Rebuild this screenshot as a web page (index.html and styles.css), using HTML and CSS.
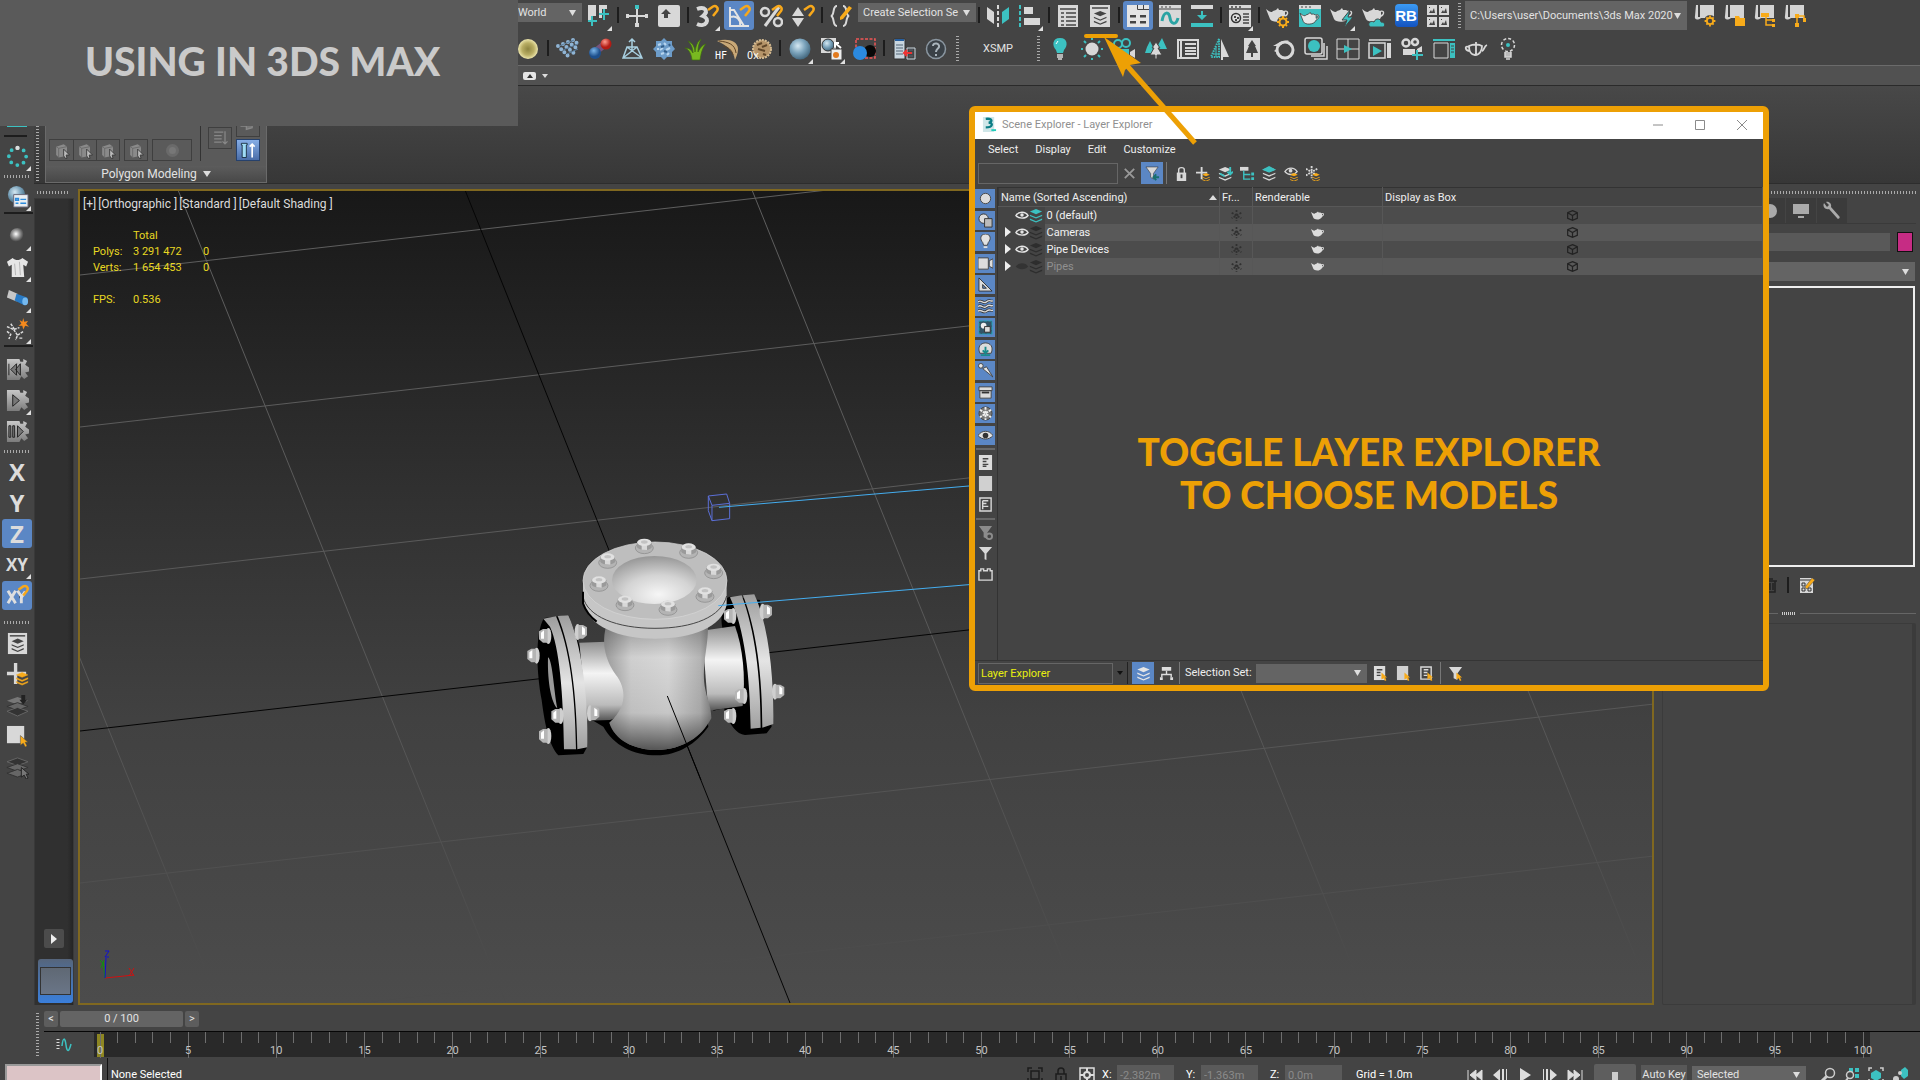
FILE: index.html
```html
<!DOCTYPE html>
<html lang="en">
<head>
<meta charset="utf-8">
<title>Using in 3ds Max</title>
<link rel="stylesheet" href="styles.css">
</head>
<body>
<svg class="defs" aria-hidden="true">
<defs>
<radialGradient id="gGlass" cx=".4" cy=".35" r=".7"><stop offset="0" stop-color="#d5e8f2"/><stop offset=".5" stop-color="#7ba3bb"/><stop offset="1" stop-color="#3d6178"/></radialGradient>
<radialGradient id="gYellow"><stop offset="0" stop-color="#8d8440"/><stop offset=".6" stop-color="#b9ae64"/><stop offset="1" stop-color="#ece5ac"/></radialGradient>
<radialGradient id="gGrey" cx=".4" cy=".4"><stop offset="0" stop-color="#fff"/><stop offset=".5" stop-color="#999"/><stop offset="1" stop-color="#444"/></radialGradient>
<radialGradient id="gRed" cx=".4" cy=".3"><stop offset="0" stop-color="#ff9d90"/><stop offset="1" stop-color="#b31b14"/></radialGradient>
<radialGradient id="gBlue" cx=".4" cy=".3"><stop offset="0" stop-color="#7ab4e8"/><stop offset="1" stop-color="#1d4f8c"/></radialGradient>
<linearGradient id="gGear" x2="0" y2="1"><stop offset="0" stop-color="#c8c8c8"/><stop offset="1" stop-color="#7b7b7b"/></linearGradient>
<linearGradient id="gSteel" x2="0" y2="1"><stop offset="0" stop-color="#8f8f8f"/><stop offset=".4" stop-color="#f4f4f4"/><stop offset=".8" stop-color="#bbb"/><stop offset="1" stop-color="#555"/></linearGradient>
<linearGradient id="gPlate" x2="0" y2="1"><stop offset="0" stop-color="#9d9d9d"/><stop offset=".5" stop-color="#e4e4e4"/><stop offset="1" stop-color="#a0a0a0"/></linearGradient>
<linearGradient id="gBody" x2="1" y2="0"><stop offset="0" stop-color="#999"/><stop offset=".25" stop-color="#cfcfcf"/><stop offset=".6" stop-color="#d8d8d8"/><stop offset=".9" stop-color="#b4b4b4"/><stop offset="1" stop-color="#858585"/></linearGradient>
<linearGradient id="gShade" x2="0" y2="1"><stop offset="0" stop-color="#000" stop-opacity=".25"/><stop offset=".25" stop-color="#000" stop-opacity="0"/><stop offset=".7" stop-color="#000" stop-opacity=".08"/><stop offset="1" stop-color="#000" stop-opacity=".6"/></linearGradient>
<radialGradient id="gDome" cx=".55" cy=".8" r=".8"><stop offset="0" stop-color="#f6f6f6"/><stop offset=".5" stop-color="#d4d4d4"/><stop offset="1" stop-color="#979797"/></radialGradient>
<linearGradient id="gGrid" gradientUnits="userSpaceOnUse" x1="0" y1="190" x2="0" y2="960"><stop offset="0" stop-color="#5e5e5e"/><stop offset=".7" stop-color="#575757"/><stop offset="1" stop-color="#4b4b4b"/></linearGradient>
<g id="stack3"><path d="M8 1 15 4 8 7 1 4Z"/><path d="M1 7.500 8 10.500 15 7.500V9L8 12 1 9Z"/><path d="M1 12 8 15 15 12V13.500L8 16.500 1 13.500Z"/></g>
<g id="magnet"><path d="M13 6 18 2.500C21 1 24 4 22 7L18 12" fill="none" stroke="#f8a81a" stroke-width="2.500"/></g>
<path id="pot" d="M6 8C3 8 2 6 0 5L4 15C6 19 17 19 19 13C24 11 23 5 18 7L16 6H13L12 4 10 6 7 7ZM19 8C21 7 22 10 19 11Z"/>
<path id="ptr" d="M0 0 8 7H5L7 11 5 12 3 8 0 10Z"/>
<g id="gear8"><circle r="3.500" fill="none" stroke="currentColor" stroke-width="2"/><path d="M0-6V-4M0 4V6M-6 0H-4M4 0H6M-4-4-3-3M4 4 3 3M4-4 3-3M-4 4-3 3" stroke="currentColor" stroke-width="2"/></g>
<g id="cog"><path d="M1 1H14L15 4H18V1L22 3 20 7 24 10V14L20 15 23 19 19 22 16 19 14 23H1Z" fill="url(#gGear)"/></g>
<g id="scroll"><path d="M2 1H4V13H6V1H20V14H7C3 17 0 15 1 12Z" fill="#d4d4d4"/></g>
<g id="nut"><ellipse rx="27" ry="17" cy="8" fill="#b4b4b4" stroke="#868686" stroke-width="2"/><path d="M-22-10C-12-22 12-22 22-8V7C12 17-12 17-22 6Z" fill="#9a9a9a"/><path d="M-8-4 8-4V14L-8 13Z" fill="#d8d8d8"/><ellipse cy="-9" rx="21" ry="11" fill="#e1e1e1"/><ellipse cy="-10" rx="10" ry="5" fill="#c2c2c2"/></g>
<g id="sidenut"><ellipse rx="9" ry="24" cx="10" fill="#cfcfcf"/><path d="M-18-14-6-21H8V20L-6 20-18 10Z" fill="#b5b5b5"/><path d="M-12-10-3-17V8L-12 8Z" fill="#fff"/></g>
</defs>
<symbol id="pivot" viewBox="0 0 24 24"><path d="M1 1H9V12H5V17H1ZM12 1H20V5H15V14H12Z" fill="#d8d8d8"/><path d="M5 12V22M1 17H10M17 5V16M12 10H22" stroke="#3cc1c1" stroke-width="2"/></symbol>
<symbol id="move" viewBox="0 0 24 24"><path d="M12 3V22M2 12H22" stroke="#d8d8d8" stroke-width="2"/><path d="M10 19H14V23H10ZM1 10H4V14H1ZM20 10H23V14H20Z" fill="#d8d8d8"/><path d="M10 1H14V5H10Z" fill="#3cc1c1"/></symbol>
<symbol id="place" viewBox="0 0 24 24"><rect x="1" y="1" width="22" height="22" rx="2" fill="#d8d8d8"/><path d="M9 5 14 10H11V14H7V10H4Z" fill="#444"/></symbol>
<symbol id="snap3" viewBox="0 0 24 24"><path d="M2 5C10 2 14 7 8 12C16 15 11 24 2 20" fill="none" stroke="#d8d8d8" stroke-width="4"/><use href="#magnet"/></symbol>
<symbol id="angle" viewBox="0 0 24 24"><path d="M3 3V22H22M3 6 7 6 17 22M4 13C9 11 14 16 13 21" fill="none" stroke="#e4e4e4" stroke-width="2"/><use href="#magnet"/></symbol>
<symbol id="percent" viewBox="0 0 24 24"><path d="M20 3 6 22" stroke="#d8d8d8" stroke-width="3"/><ellipse cx="6" cy="8" rx="4" ry="4" fill="none" stroke="#d8d8d8" stroke-width="2.500"/><circle cx="19" cy="18" r="4" fill="none" stroke="#d8d8d8" stroke-width="2.500"/><use href="#magnet"/></symbol>
<symbol id="spin" viewBox="0 0 24 24"><path d="M7 3 13 12H1ZM1 14H13L7 23Z" fill="#d8d8d8"/><use href="#magnet"/></symbol>
<symbol id="braces" viewBox="0 0 24 24"><path d="M8 2C3 2 6 11 2 12C6 13 3 22 8 22M14 2C19 2 16 11 20 12C16 13 19 22 14 22" fill="none" stroke="#d8d8d8" stroke-width="2"/><path d="M11 13 20 2 23 4 14 15 11 16Z" fill="#f8ab1a"/></symbol>
<symbol id="mirror" viewBox="0 0 24 24"><path d="M1 3 8 8V20L1 15Z" fill="#d8d8d8"/><path d="M23 3 16 8V20L23 15Z" fill="#3cc1c1"/><path d="M12 1V23" stroke="#d8d8d8" stroke-width="2" stroke-dasharray="4 2"/></symbol>
<symbol id="align" viewBox="0 0 24 24"><path d="M2 1V23" stroke="#3cc1c1" stroke-width="2" stroke-dasharray="4 2"/><path d="M6 3H15V10H6ZM6 14H22V21H6Z" fill="#d8d8d8"/></symbol>
<symbol id="listwin" viewBox="0 0 24 24"><path d="M2 1H22V23H2Z" fill="#d8d8d8"/><path d="M4 5H20M5 9H8M10 9H20M5 13H8M10 13H20M5 17H8M10 17H20M5 21H8M10 21H20" stroke="#444" stroke-width="1.500"/></symbol>
<symbol id="layerwin" viewBox="0 0 24 24"><path d="M2 1H22V23H2Z" fill="#d8d8d8"/><path d="M4 4H20" stroke="#444" stroke-width="1.500"/><use href="#stack3" transform="translate(5 6) scale(.9)" fill="#444"/></symbol>
<symbol id="ribbonwin" viewBox="0 0 24 24"><path d="M1 1H11V4H12V1H23V23H1Z" fill="#e4e4e4"/><path d="M11.500 1V5.500H23M17.500 1V5" fill="none" stroke="#444"/><path d="M4 11H10V13.500H4ZM14 11H20V13.500H14ZM4 17H10V19.500H4ZM14 17H20V19.500H14Z" fill="#444"/></symbol>
<symbol id="curve" viewBox="0 0 24 24"><path d="M1 1H23V23H1Z" fill="#d8d8d8"/><path d="M1 5H23M3 3H5M7 3H9M11 3H13" stroke="#444"/><path d="M4 17C6 6 11 8 12 14S18 22 20 14" fill="none" stroke="#2aa3a3" stroke-width="3"/></symbol>
<symbol id="schem" viewBox="0 0 24 24"><path d="M1 1H23V5H1Z" fill="#d8d8d8"/><path d="M1 19H23V23H1ZM11 7H13V11H17L12 16 7 11H11Z" fill="#3cc1c1"/></symbol>
<symbol id="mat" viewBox="0 0 24 24"><path d="M1 1H23V23H1Z" fill="#d8d8d8"/><path d="M1 5H23M3 3H5M7 3H9M11 3H13M15 10H21M15 13H21M15 16H21M15 19H21" stroke="#444" stroke-width="1.500"/><circle cx="8" cy="14" r="4.500" fill="#ddd" stroke="#333" stroke-width="1.500"/><path d="M6 12H8V14H6ZM9 13H11V15H9ZM7 15H9V17H7Z" fill="#444"/></symbol>
<symbol id="potgear" viewBox="0 0 24 24"><use href="#pot" fill="#d8d8d8"/><g transform="translate(17 18)" color="#f8ab1a"><circle r="6" fill="#444"/><use href="#gear8"/></g></symbol>
<symbol id="potwin" viewBox="0 0 24 24"><path d="M1 1H23V23H1Z" fill="#3cc1c1"/><path d="M1 1H23V5H1Z" fill="#d8d8d8"/><path d="M3 3H5M7 3H9M11 3H13" stroke="#444"/><use href="#pot" transform="translate(2 5) scale(.85)" fill="#e6e6e6" stroke="#444"/></symbol>
<symbol id="potbolt" viewBox="0 0 24 24"><use href="#pot" fill="#d8d8d8"/><path d="M20 6 12 16H17L14 24 23 13H18Z" fill="#3cc1c1" stroke="#444"/></symbol>
<symbol id="potcloud" viewBox="0 0 24 24"><use href="#pot" fill="#d8d8d8"/><path d="M8 23C5 20 8 16 12 18C14 13 19 15 19 18C24 18 23 23 21 23Z" fill="#3cc1c1" stroke="#444"/></symbol>
<symbol id="pics" viewBox="0 0 24 24"><path d="M1 1H11V11H1ZM13 1H23V11H13ZM1 13H11V23H1ZM13 13H23V23H13Z" fill="#d8d8d8"/><path d="M3 9 5 6 6 8 8 4 9 9ZM15 9 17 6 18 8 20 4 21 9ZM3 21 5 18 6 20 8 16 9 21ZM15 21 17 18 18 20 20 16 21 21Z" fill="#444"/><path d="M3 3H4V4H3ZM15 3H16V4H15ZM3 15H4V16H3ZM15 15H16V16H15Z" fill="#444"/></symbol>
<symbol id="sgear" viewBox="0 0 24 24"><use href="#scroll"/><g transform="translate(16 17)" color="#f8ab1a"><circle r="6" fill="#444"/><use href="#gear8" transform="scale(.9)"/></g></symbol>
<symbol id="sfold" viewBox="0 0 24 24"><use href="#scroll"/><path d="M11 12H15L16 14H21V22H11Z" fill="#f8ab1a"/></symbol>
<symbol id="stree" viewBox="0 0 24 24"><use href="#scroll"/><path d="M7 9H15V13H7ZM18 15H21V18H18ZM18 20H21V23H18Z" fill="#f8ab1a"/><path d="M12 13V21H18M12 16H18" fill="none" stroke="#f8ab1a" stroke-width="1.500"/></symbol>
<symbol id="snode" viewBox="0 0 24 24"><use href="#scroll"/><path d="M11 10H15V14H11ZM11 19H15V23H11ZM19 14H22V18H19Z" fill="#f8ab1a"/><path d="M13 14V19M15 12H20V14" fill="none" stroke="#f8ab1a" stroke-width="1.500"/></symbol>
<symbol id="ysphere" viewBox="0 0 24 24"><circle cx="12" cy="12" r="10" fill="url(#gYellow)"/></symbol>
<symbol id="array" viewBox="0 0 24 24"><g fill="none" stroke="#8fb4d4" stroke-width="4" stroke-linecap="round" stroke-dasharray="0 4.500"><path d="M2 9 14 21M7 7 19 17M12 5 22 12M17 3 22 7"/></g><path d="M3 9 18 3M7 13 22 7M11 17 22 12" stroke="#5c7f9e" fill="none"/></symbol>
<symbol id="blobs" viewBox="0 0 24 24"><path d="M7 15 17 7" stroke="#76537c" stroke-width="7"/><circle cx="7" cy="16" r="6" fill="url(#gBlue)"/><circle cx="18" cy="7" r="5.500" fill="url(#gRed)"/></symbol>
<symbol id="lattice" viewBox="0 0 24 24"><path d="M3 21 7 10H17L22 21ZM7 10 22 21M17 10 3 21M12 15V2M9 5 12 2 15 5" fill="none" stroke="#a8cfe0" stroke-width="1.500"/></symbol>
<symbol id="bush" viewBox="0 0 24 24"><path d="M12 1 15 4 20 4 20 8 23 12 20 15 20 20 15 20 12 23 9 20 4 20 4 15 1 12 4 9 4 4 9 4Z" fill="#6d9cc9"/><path d="M6 8 9 7M12 6 14 8M8 13 11 11M14 13 18 11M9 17 12 16M15 18 17 16M5 12H7" stroke="#b9d6ef" stroke-width="2"/><path d="M9 10 12 9M12 14 15 15M17 7 18 9" stroke="#345f8a" stroke-width="2"/></symbol>
<symbol id="grass" viewBox="0 0 24 24"><path d="M8 23C7 15 4 12 1 11C6 11 8 14 9 16C9 10 6 6 4 4C9 6 11 11 11 15C12 9 13 5 17 2C14 8 14 12 14 15C16 11 18 8 22 7C18 11 17 17 16 23Z" fill="#78b820" stroke="#3d6a10" stroke-width=".7"/></symbol>
<symbol id="hair" viewBox="0 0 24 24"><path d="M1 4C10 1 22 3 22 12C22 17 20 20 19 23C18 17 16 11 1 4Z" fill="#c8a877"/><path d="M3 4C12 5 19 7 20 16M7 9C12 10 16 13 17 18" stroke="#5f4425" fill="none"/></symbol>
<symbol id="ox" viewBox="0 0 24 24"><circle cx="14" cy="12" r="9" fill="#b59469" stroke="#d5bb91" stroke-width="2" stroke-dasharray="2 1"/><path d="M9 8 14 6M14 10 19 8M10 12 17 14M15 17 18 18" stroke="#60472a" stroke-width="2"/></symbol>
<symbol id="glass" viewBox="0 0 24 24"><circle cx="12" cy="12" r="10.500" fill="url(#gGlass)"/></symbol>
<symbol id="matwin" viewBox="0 0 24 24"><path d="M1 1H16V16H1Z" fill="#d8d8d8"/><circle cx="8" cy="8" r="6" fill="url(#gGlass)" stroke="#333"/><path d="M11 12H22V23H11Z" fill="#eee" stroke="#444"/><circle cx="16" cy="18" r="3" fill="#e27a1e"/><path d="M21 11 15 6M15 10V6H19" stroke="#fff" stroke-width="2"/></symbol>
<symbol id="redbox" viewBox="0 0 24 24"><path d="M4 2H23V21H4Z" fill="none" stroke="#f05555" stroke-width="1.500" stroke-dasharray="3 1.500"/><circle cx="18" cy="14" r="6" fill="#080808"/><circle cx="8" cy="16" r="7" fill="#2b8ae0"/></symbol>
<symbol id="docs" viewBox="0 0 24 24"><path d="M2 2H13V22H2Z" fill="#c9d6df" stroke="#333"/><path d="M3 3H12" stroke="#275f9f" stroke-width="2"/><path d="M4 8H11M4 11H11M4 14H11M4 17H11M17 13H21M17 16H21M17 19H21" stroke="#567"/><path d="M15 11H23V22H15Z" fill="none" stroke="#c9d6df"/><path d="M20 16H12M15 13 12 16 15 19" stroke="#e33" fill="none" stroke-width="2"/></symbol>
<symbol id="help" viewBox="0 0 24 24"><circle cx="12" cy="12" r="9.500" fill="#3a4147" stroke="#8a96a0" stroke-width="1.500"/><path d="M9 9C9 5 16 6 15 10C14 12 12 12 12 15M12 17V19" fill="none" stroke="#aab5bd" stroke-width="2"/></symbol>
<symbol id="bulb" viewBox="0 0 24 24"><path d="M12 1C4 1 4 9 8 13L9 16H15L16 13C20 9 20 1 12 1Z" fill="#3cc1c1"/><path d="M9 18H15M9 20H15M10 22H14" stroke="#d8d8d8" stroke-width="1.500"/><path d="M8 7 10 4" stroke="#fff"/></symbol>
<symbol id="sun" viewBox="0 0 24 24"><circle cx="12" cy="12" r="6.500" fill="#d8d8d8"/><path d="M12 1V3M12 21V23M1 12H3M21 12H23M4 4 6 6M18 18 20 20M20 4 18 6M4 20 6 18" stroke="#3cc1c1" stroke-width="2"/></symbol>
<symbol id="cam" viewBox="0 0 24 24"><circle cx="6" cy="7" r="4" fill="none" stroke="#3cc1c1" stroke-width="2"/><circle cx="14" cy="6" r="4" fill="none" stroke="#3cc1c1" stroke-width="2"/><path d="M3 12H17V18H3Z" fill="#3cc1c1"/><path d="M18 15 23 12V21L18 18Z" fill="#d8d8d8"/></symbol>
<symbol id="trees" viewBox="0 0 24 24"><path d="M6 4 10 12 8 13 9 16H1L3 10ZM18 1 23 12H15L14 8Z" fill="#3cc1c1"/><path d="M12 5 16 11H14L18 18H13V22H11V18H6L10 11H8Z" fill="#d8d8d8" stroke="#444"/></symbol>
<symbol id="book" viewBox="0 0 24 24"><path d="M2 3H22V21H2Z" fill="none" stroke="#d8d8d8" stroke-width="2"/><path d="M5 4V20M9 7H20M9 11H20M9 14H20M9 17H20" stroke="#d8d8d8" stroke-width="2"/></symbol>
<symbol id="halftree" viewBox="0 0 24 24"><path d="M11 2 3 20H11Z" fill="none" stroke="#3cc1c1" stroke-width="2" stroke-dasharray="1.500 1"/><path d="M8 10V20M5 17H11" stroke="#3cc1c1"/><path d="M13 2 21 20H15V23H13Z" fill="#d8d8d8"/></symbol>
<symbol id="treecard" viewBox="0 0 24 24"><path d="M4 1H20V23H4Z" fill="#d8d8d8"/><path d="M12 3 16 9H15L18 16H13V20H11V16H6L9 9H8Z" fill="#444"/></symbol>
<symbol id="ringc" viewBox="0 0 24 24"><circle cx="13" cy="13" r="8" fill="none" stroke="#d8d8d8" stroke-width="3"/><path d="M1 9 8 5 17 3 7 9ZM2 14 6 11V16Z" fill="#d8d8d8"/></symbol>
<symbol id="stackball" viewBox="0 0 24 24"><path d="M7 19H20V6M10 22H23V9" fill="none" stroke="#d8d8d8" stroke-width="1.500"/><rect x="1" y="1" width="17" height="16" rx="2" fill="#444" stroke="#d8d8d8" stroke-width="1.500"/><circle cx="10" cy="9" r="6" fill="#3cc1c1"/></symbol>
<symbol id="gridplay" viewBox="0 0 24 24"><path d="M1 2H23V22H1ZM12 2V22M1 12H23" fill="none" stroke="#d8d8d8"/><path d="M8 8 16 12 8 16Z" fill="#3cc1c1"/></symbol>
<symbol id="panelplay" viewBox="0 0 24 24"><path d="M1 3H23M1 6H17V21H1Z" fill="none" stroke="#d8d8d8" stroke-width="1.500"/><path d="M19 6H23V21H19Z" fill="#d8d8d8"/><path d="M5 9 14 14 5 19Z" fill="#3cc1c1"/></symbol>
<symbol id="camplus" viewBox="0 0 24 24"><circle cx="6" cy="6" r="3.500" fill="none" stroke="#d8d8d8" stroke-width="2.500"/><circle cx="15" cy="5" r="3" fill="none" stroke="#d8d8d8" stroke-width="2.500"/><path d="M3 12H15V18H3ZM17 12 22 9V15H17Z" fill="#d8d8d8"/><path d="M17 13V23M12 18H23" stroke="#3cc1c1" stroke-width="2"/></symbol>
<symbol id="panel" viewBox="0 0 24 24"><path d="M1 3H23" stroke="#3cc1c1" stroke-width="2"/><path d="M2 6H16V21H2Z" fill="none" stroke="#d8d8d8"/><path d="M18 6H23V21H18Z" fill="#3cc1c1"/><path d="M19 9H22M19 12H22M19 15H22" stroke="#444"/></symbol>
<symbol id="wpot" viewBox="0 0 24 24"><path d="M5 9C9 7 15 7 18 9C18 13 16 18 11 18C7 18 5 14 5 9ZM5 10C0 8 1 14 6 14M18 14C20 14 20 9 23 8M12 8V17M12 7V5" fill="none" stroke="#d8d8d8" stroke-width="1.800"/></symbol>
<symbol id="bulbdot" viewBox="0 0 24 24"><circle cx="12" cy="8" r="6.500" fill="none" stroke="#d8d8d8" stroke-width="1.500" stroke-dasharray="3 2"/><circle cx="12" cy="8" r="2" fill="#3cc1c1"/><path d="M9 15V20H15V15M10 22H14" fill="#bbb" stroke="#d8d8d8" stroke-width="1.500"/></symbol>
<symbol id="ringdots" viewBox="0 0 24 24"><circle cx="12" cy="12" r="9" fill="none" stroke="#3cc1c1" stroke-width="4" stroke-linecap="round" stroke-dasharray="0 7.070" transform="rotate(-90 12 12)"/><circle cx="12" cy="3" r="2.300" fill="#ddd"/></symbol>
<symbol id="ballwin" viewBox="0 0 24 24"><circle cx="11" cy="10" r="9" fill="url(#gGlass)"/><path d="M8 10H23V23H8Z" fill="#e9eef2" stroke="#667"/><path d="M10 14H13V16H10ZM15 15H21M10 19H13M15 19H21" stroke="#2d8bdc" stroke-width="1.500" fill="none"/></symbol>
<symbol id="ball" viewBox="0 0 24 24"><circle cx="12" cy="11" r="8" fill="url(#gGrey)"/></symbol>
<symbol id="shirt" viewBox="0 0 24 24"><path d="M7 2C10 5 14 5 17 2L23 6 21 11 18 9 19 22H6L6 9 3 11 1 6Z" fill="#e6e6e6"/><path d="M9 8 10 20M14 6 15 20" stroke="#b5b5b5"/></symbol>
<symbol id="capsule" viewBox="0 0 24 24"><path d="M3 3 12 7 11 15 1 11Z" fill="#c7c7c7"/><path d="M11 7 22 11C24 14 22 19 19 19L9 14Z" fill="#297ac4"/><ellipse cx="20" cy="15" rx="3" ry="4" fill="#75b9ef"/></symbol>
<symbol id="stick" viewBox="0 0 24 24"><path d="M1 9 8 12 14 10M8 12 12 18 10 23M12 18 18 14M1 14 5 17 3 22M5 6 9 12M14 21H18" fill="none" stroke="#ddd" stroke-width="1.500" stroke-dasharray="3 1"/><path d="M18 0 19 4 23 3 21 6 24 9 20 8 18 12 17 8 13 8 16 6 14 2 17 4Z" fill="#f58a1d"/></symbol>
<symbol id="cogback" viewBox="0 0 24 24"><use href="#cog"/><path d="M3 6V18M5 12 11 6V18ZM10 12 15 6V18Z" fill="#777" stroke="#222"/></symbol>
<symbol id="cogplay" viewBox="0 0 24 24"><use href="#cog"/><path d="M7 6 14 12 7 18Z" fill="#777" stroke="#222"/></symbol>
<symbol id="cogpause" viewBox="0 0 24 24"><use href="#cog"/><path d="M3 6H5V18H3ZM7 6H9V18H7ZM12 6 18 12 12 18Z" fill="#777" stroke="#222"/></symbol>
<symbol id="addlayer" viewBox="0 0 24 24"><path d="M10 0V22M1 11H21" stroke="#d8d8d8" stroke-width="3.500"/><use href="#stack3" transform="translate(10 9) scale(.85)" fill="#f8ab1a" stroke="#f8ab1a" stroke-width=".6"/></symbol>
<symbol id="layerdim" viewBox="0 0 24 24"><path d="M1 7 12 3 23 7 12 11Z" fill="#777"/><path d="M1 13 12 9 23 13 12 17Z" fill="#666" stroke="#333"/><path d="M1 18 12 14 23 18 12 23Z" fill="#333" stroke="#666"/><path d="M16 1H20V6H22L18 11 14 6H16Z" fill="#222"/></symbol>
<symbol id="sqptr" viewBox="0 0 24 24"><path d="M1 1H19V19H1Z" fill="#d8d8d8"/><use href="#ptr" x="15" y="11" fill="#f8ab1a" stroke="#444" stroke-width=".5"/></symbol>
<symbol id="layerptr" viewBox="0 0 24 24"><path d="M1 6 12 2 23 6 12 10Z" fill="#333" stroke="#666"/><path d="M1 12 12 8 23 12 12 16Z" fill="#666" stroke="#333"/><path d="M1 18 12 14 23 18 12 22Z" fill="#666" stroke="#333"/><use href="#ptr" x="16" y="12" fill="#777" stroke="#222"/></symbol>
<symbol id="xysnap" viewBox="0 0 24 24"><path d="M2 7 10 20M10 7 2 20M12 7 16 13V20M20 8 16 14" stroke="#dedede" stroke-width="3"/><use href="#magnet"/></symbol>
<symbol id="gcube" viewBox="0 0 24 24"><path d="M5 8 14 5 18 8V19L8 21 5 18Z" fill="#8a8a8a"/><path d="M5 8 8 10V21M8 10 18 8" stroke="#666" fill="none"/><path d="M14 11 21 18H17L18 22 16 22 14 19Z" fill="#bbb" stroke="#333"/></symbol>
<symbol id="filter" viewBox="0 0 16 16"><path d="M1 1H15L9 8V15L7 14V8Z" fill="#d8d8d8"/></symbol>
<symbol id="filterarrow" viewBox="0 0 16 16"><path d="M1 1H14L9 8V14L6 12V8Z" fill="#d8d8d8" stroke="#333" stroke-width=".6"/><path d="M15 12H9M12 9 9 12 12 15" stroke="#176f6f" fill="none" stroke-width="2"/></symbol>
<symbol id="filtergear" viewBox="0 0 16 16"><path d="M1 1H15L10 8V15L6 13V8Z" fill="#8c8c8c"/><circle cx="12" cy="12" r="3" fill="#444" stroke="#8c8c8c" stroke-width="2"/></symbol>
<symbol id="filterptr" viewBox="0 0 16 16"><path d="M1 1H15L10 8V15L6 13V8Z" fill="#d8d8d8"/><use href="#ptr" transform="translate(9 7) scale(.75)" fill="#f8ab1a"/></symbol>
<symbol id="lock" viewBox="0 0 16 16"><path d="M5 8V4C5 1 11 1 11 4V8" fill="none" stroke="#d8d8d8" stroke-width="1.500"/><path d="M3 7H13V16H3Z" fill="#d8d8d8"/><path d="M8 9V13" stroke="#444" stroke-width="2"/></symbol>
<symbol id="add16" viewBox="0 0 16 16"><path d="M6 1V14M0 7H12" stroke="#d8d8d8" stroke-width="2"/><use href="#stack3" transform="translate(6 7) scale(.58)" fill="#f8ab1a"/></symbol>
<symbol id="lay1" viewBox="0 0 16 16"><use href="#stack3" transform="scale(.95)" fill="#d8d8d8"/><path d="M13 1V9M10 6 13 9 16 6M2 8 7 11" stroke="#3cc1c1" stroke-width="2" fill="none"/></symbol>
<symbol id="tree16" viewBox="0 0 16 16"><path d="M0 1H9V5H0Z" fill="#d8d8d8"/><path d="M4 5V14H11M4 9H11" stroke="#3cc1c1" fill="none" stroke-width="1.500"/><path d="M12 7H15V10H12ZM12 12H15V15H12Z" fill="#3cc1c1"/></symbol>
<symbol id="lay2" viewBox="0 0 16 16"><use href="#stack3" transform="scale(.95)" fill="#d8d8d8"/><path d="M7.500 0 15 4 7.500 7 0 4Z" fill="#3cc1c1"/></symbol>
<symbol id="eye16" viewBox="0 0 16 16"><path d="M1 6C4 1 11 1 14 6C11 10 4 10 1 6Z" fill="none" stroke="#d8d8d8" stroke-width="1.500"/><circle cx="7" cy="5" r="2" fill="#d8d8d8"/><use href="#stack3" transform="translate(6 7) scale(.58)" fill="#f8ab1a"/></symbol>
<symbol id="snow16" viewBox="0 0 16 16"><path d="M6 0V13M0 3 12 10M12 3 0 10" stroke="#d8d8d8" stroke-width="2" stroke-dasharray="2 1"/><use href="#stack3" transform="translate(6 7) scale(.58)" fill="#f8ab1a"/></symbol>
<symbol id="eye" viewBox="0 0 16 16"><path d="M1 8C4 3 12 3 15 8C12 12 4 12 1 8Z" fill="none" stroke="currentColor" stroke-width="1.500"/><circle cx="8" cy="7.500" r="2" fill="currentColor"/></symbol>
<symbol id="eyeoff" viewBox="0 0 16 16"><path d="M1 8C4 3 12 3 15 8C12 12 4 12 1 8Z" fill="#333"/></symbol>
<symbol id="layers" viewBox="0 0 16 17"><use href="#stack3" fill="currentColor"/></symbol>
<symbol id="flake" viewBox="0 0 16 16"><path d="M8 0V16M1 4 15 12M15 4 1 12" stroke="currentColor" stroke-width="2.500" stroke-dasharray="3 2"/></symbol>
<symbol id="teapot" viewBox="0 0 24 22"><use href="#pot" fill="#dcdcdc"/></symbol>
<symbol id="boxi" viewBox="0 0 16 16"><path d="M8 1 15 4V12L8 15 1 12V4ZM1 4 8 8 15 4M8 8V15" fill="none" stroke="#222" stroke-width="1.800"/></symbol>
<symbol id="c1" viewBox="0 0 16 16"><circle cx="8" cy="8" r="5.500" fill="#dcdcdc" stroke="#444"/></symbol>
<symbol id="c2" viewBox="0 0 16 16"><circle cx="6" cy="6" r="5" fill="#dcdcdc" stroke="#333"/><path d="M7 6H15V15H7Z" fill="#bbb" stroke="#333"/></symbol>
<symbol id="c3" viewBox="0 0 16 16"><path d="M8 0C2 0 2 6 5 9L6 12H10L11 9C14 6 14 0 8 0Z" fill="#e2e2e2" stroke="#444"/><path d="M6 14H10" stroke="#ddd" stroke-width="2"/></symbol>
<symbol id="c4" viewBox="0 0 16 16"><path d="M0 2H11V14H0ZM12 5 16 3V13L12 11Z" fill="#dcdcdc" stroke="#444"/></symbol>
<symbol id="c5" viewBox="0 0 16 16"><path d="M1 1V15H15ZM5 8V12H9Z" fill="#dcdcdc" stroke="#333" fill-rule="evenodd"/></symbol>
<symbol id="c6" viewBox="0 0 16 16"><path d="M0 3C4 0 5 6 9 3S13 3 16 2M0 8C4 5 5 11 9 8S13 8 16 7M0 13C4 10 5 16 9 13S13 13 16 12" fill="none" stroke="#333" stroke-width="3"/><path d="M0 3C4 0 5 6 9 3S13 3 16 2M0 8C4 5 5 11 9 8S13 8 16 7M0 13C4 10 5 16 9 13S13 13 16 12" fill="none" stroke="#dcdcdc" stroke-width="1.500"/></symbol>
<symbol id="c7" viewBox="0 0 16 16"><path d="M1 1H15V15H1Z" fill="#356" stroke="#2ab" stroke-dasharray="4 1"/><circle cx="6" cy="6" r="3" fill="#eee"/><path d="M7 7H13V13H7Z" fill="#ddd" stroke="#333"/></symbol>
<symbol id="c8" viewBox="0 0 16 16"><path d="M2 12C-1 5 3 1 8 1S17 5 14 12Z" fill="#dcdcdc" stroke="#444"/><path d="M8 5V12M5 9 8 12 11 9M3 14H13" stroke="#198a8a" stroke-width="2" fill="none"/></symbol>
<symbol id="c9" viewBox="0 0 16 16"><circle cx="3" cy="3" r="2.500" fill="#e6e6e6" stroke="#444"/><path d="M5 6 9 4 16 15Z" fill="#e6e6e6" stroke="#444"/></symbol>
<symbol id="c10" viewBox="0 0 16 16"><path d="M1 2H15V6H1ZM2 6H14V14H2Z" fill="#dcdcdc" stroke="#444"/><path d="M4 8H12" stroke="#333" stroke-width="2"/></symbol>
<symbol id="c11" viewBox="0 0 16 16"><circle cx="8" cy="8" r="7" fill="#777" stroke="#444"/><path d="M8 1V15M2 4 14 12M14 4 2 12" stroke="#eee" stroke-width="2" stroke-dasharray="3 1"/></symbol>
<symbol id="c12" viewBox="0 0 16 16"><path d="M0 8C4 2 12 2 16 8C12 13 4 13 0 8Z" fill="#e2e2e2" stroke="#444"/><circle cx="8" cy="8" r="3" fill="#333"/></symbol>
<symbol id="doc" viewBox="0 0 16 16"><path d="M1 0H15V16H1Z" fill="#dcdcdc"/><path d="M5 4H11M5 7H9M5 10H11M5 12H9" stroke="#444" stroke-width="1.500"/></symbol>
<symbol id="blank" viewBox="0 0 16 16"><path d="M1 0H15V16H1Z" fill="#d0d0d0"/></symbol>
<symbol id="docout" viewBox="0 0 16 16"><path d="M2 1H14V15H2Z" fill="#444" stroke="#d8d8d8" stroke-width="1.500"/><path d="M5 4H11M5 7H9M5 10H11M5 4V13" stroke="#d8d8d8" stroke-width="1.500"/></symbol>
<symbol id="brick" viewBox="0 0 16 16"><path d="M1 4H3V2H6V4H10V2H13V4H15V14H1Z" fill="none" stroke="#d8d8d8" stroke-width="1.500"/></symbol>
<symbol id="hier" viewBox="0 0 16 16"><path d="M3 1H13V5H3ZM1 12H4V15H1ZM12 12H15V15H12Z" fill="#dcdcdc"/><path d="M8 5V9M3 12V9H13V12" fill="none" stroke="#dcdcdc" stroke-width="1.500"/></symbol>
<symbol id="docp" viewBox="0 0 16 16"><path d="M1 0H13V15H1Z" fill="#dcdcdc"/><path d="M4 4H10M4 7H8M4 10H8" stroke="#444" stroke-width="1.500"/><use href="#ptr" transform="translate(9 7) scale(.75)" fill="#f8ab1a"/></symbol>
<symbol id="blankp" viewBox="0 0 16 16"><path d="M1 0H13V15H1Z" fill="#d0d0d0"/><use href="#ptr" transform="translate(9 7) scale(.75)" fill="#f8ab1a"/></symbol>
<symbol id="docoutp" viewBox="0 0 16 16"><path d="M2 1H13V14H2Z" fill="none" stroke="#d8d8d8" stroke-width="1.500"/><path d="M5 4H10M5 7H9M5 10H9" stroke="#d8d8d8" stroke-width="1.500"/><use href="#ptr" transform="translate(9 7) scale(.75)" fill="#f8ab1a"/></symbol>
<symbol id="app3" viewBox="0 0 16 16"><path d="M1 0H13V16H1Z" fill="#cfe6e8"/><path d="M4 2C12 1 11 6 7 6C12 6 12 11 4 11" fill="none" stroke="#0b7d85" stroke-width="2.500"/><path d="M10 14H15" stroke="#2cb" stroke-width="2"/></symbol>
<symbol id="monitor" viewBox="0 0 24 24"><path d="M4 5H20V15H4ZM9 17H15V19H9Z" fill="#aaa"/></symbol>
<symbol id="wrench" viewBox="0 0 24 24"><path d="M4 4C2 8 6 11 9 10L17 19C18 21 21 19 19 17L11 8C12 5 9 2 6 3L9 6 7 8Z" fill="#aaa"/></symbol>
<symbol id="disc" viewBox="0 0 24 24"><circle cx="12" cy="12" r="7" fill="#aaa"/></symbol>
<symbol id="trash" viewBox="0 0 16 16"><path d="M2 4H14M4 4V15H12V4M6 2H10M7 6V13M10 6V13" fill="none" stroke="#222" stroke-width="1.500"/></symbol>
<symbol id="sets" viewBox="0 0 16 16"><path d="M1 1H14V16H1Z" fill="#d8d8d8"/><path d="M3 6H6V9H3ZM3 11H6V14H3ZM9 11H12V14H9ZM1 3H14" fill="none" stroke="#333"/><path d="M6 10 13 1 16 3 8 12Z" fill="#f8ab1a" stroke="#444" stroke-width=".5"/></symbol>
<symbol id="zoomi" viewBox="0 0 16 16"><circle cx="10" cy="6" r="4.500" fill="none" stroke="#ccc" stroke-width="1.500"/><path d="M7 9 1 15" stroke="#ccc" stroke-width="3"/></symbol>
<symbol id="zoomall" viewBox="0 0 16 16"><path d="M5 1H9V5H5ZM11 1H15V5H11ZM11 7H15V11H11Z" fill="#3cc1c1"/><circle cx="6" cy="8" r="3.500" fill="none" stroke="#ccc" stroke-width="1.500"/><path d="M4 11 1 15" stroke="#ccc" stroke-width="2"/></symbol>
<symbol id="extent" viewBox="0 0 16 16"><path d="M1 4V1H4M12 1H15V4M1 12V15H4M12 15H15V12" fill="none" stroke="#ccc" stroke-width="1.500"/><path d="M8 3 13 6V11L8 14 3 11V6Z" fill="#3cc1c1"/></symbol>
<symbol id="extall" viewBox="0 0 16 16"><path d="M9 3 13 0 16 3V9L12 12 9 9Z" fill="#3cc1c1"/><circle cx="4" cy="12" r="3" fill="#ccc"/><circle cx="8" cy="6" r="2" fill="#ccc"/></symbol>
<symbol id="curvemini" viewBox="0 0 16 16"><path d="M2 2V14" stroke="#ddd" stroke-width="3" stroke-dasharray="1 2"/><path d="M6 9C7 0 9 0 10 8S13 15 15 7" fill="none" stroke="#3cc1c1" stroke-width="1.500"/></symbol>
<symbol id="iso" viewBox="0 0 16 16"><path d="M1 5V1H5M11 1H15V5M1 11V15H5M15 11V15H11M4 4H12V12H4Z" fill="none" stroke="#1c1c1c" stroke-width="1.500"/></symbol>
<symbol id="lockd" viewBox="0 0 16 16"><path d="M5 7V4C5 0 11 0 11 4V7M3 7H13V16H3ZM8 9V13" fill="none" stroke="#1c1c1c" stroke-width="1.500"/></symbol>
<symbol id="absmode" viewBox="0 0 16 16"><path d="M1 1H15V15H1Z" fill="none" stroke="#ddd" stroke-width="1.500"/><circle cx="8" cy="8" r="3" fill="none" stroke="#ddd" stroke-width="2"/><path d="M8 1V5M8 11V15M1 8H5M11 8H15" stroke="#ddd" stroke-width="2"/></symbol>
<symbol id="p1" viewBox="0 0 16 16"><path d="M1 3V13M9 3V13L3 8ZM15 3V13L9 8Z" fill="#ddd" stroke="#ddd"/></symbol>
<symbol id="p2" viewBox="0 0 16 16"><path d="M8 2V14L1 8ZM10 2H12V14H10ZM14 2H15V14H14Z" fill="#ddd"/></symbol>
<symbol id="p3" viewBox="0 0 16 16"><path d="M3 1 14 8 3 15Z" fill="#ddd"/></symbol>
<symbol id="p4" viewBox="0 0 16 16"><path d="M8 2V14L15 8ZM1 2H2V14H1ZM4 2H6V14H4Z" fill="#ddd"/></symbol>
<symbol id="p5" viewBox="0 0 16 16"><path d="M15 3V13M7 3V13L13 8ZM1 3V13L7 8Z" fill="#ddd" stroke="#ddd"/></symbol>
</svg>

<div class="app">
<header class="topbars">
  <div class="bar" role="toolbar" aria-label="Main toolbar">
    <select class="combo ref" aria-label="Reference coordinate system"><option>World</option></select>
    <button class="tool fly" aria-label="Use pivot point center"><svg><use href="#pivot"/></svg></button><i class="sep"></i>
    <button class="tool" aria-label="Select and manipulate"><svg><use href="#move"/></svg></button>
    <button class="tool" aria-label="Keyboard shortcut override"><svg><use href="#place"/></svg></button><i class="sep"></i>
    <button class="tool fly" aria-label="Snaps toggle"><svg><use href="#snap3"/></svg></button>
    <button class="tool on" aria-label="Angle snap"><svg><use href="#angle"/></svg></button>
    <button class="tool" aria-label="Percent snap"><svg><use href="#percent"/></svg></button>
    <button class="tool" aria-label="Spinner snap"><svg><use href="#spin"/></svg></button><i class="sep"></i>
    <button class="tool" aria-label="Edit named selection sets"><svg><use href="#braces"/></svg></button>
    <select class="combo sets" aria-label="Named selection sets"><option>Create Selection Se</option></select><i class="sep"></i>
    <button class="tool" aria-label="Mirror"><svg><use href="#mirror"/></svg></button>
    <button class="tool fly" aria-label="Align"><svg><use href="#align"/></svg></button><i class="sep"></i>
    <button class="tool" aria-label="Toggle Scene Explorer"><svg><use href="#listwin"/></svg></button>
    <button class="tool" aria-label="Toggle Layer Explorer"><svg><use href="#layerwin"/></svg></button><i class="sep"></i>
    <button class="tool on" aria-label="Toggle ribbon"><svg><use href="#ribbonwin"/></svg></button>
    <button class="tool" aria-label="Curve editor"><svg><use href="#curve"/></svg></button>
    <button class="tool" aria-label="Schematic view"><svg><use href="#schem"/></svg></button><i class="sep"></i>
    <button class="tool fly" aria-label="Material editor"><svg><use href="#mat"/></svg></button><i class="sep"></i>
    <button class="tool" aria-label="Render setup"><svg><use href="#potgear"/></svg></button>
    <button class="tool" aria-label="Rendered frame window"><svg><use href="#potwin"/></svg></button>
    <button class="tool fly" aria-label="Render production"><svg><use href="#potbolt"/></svg></button>
    <button class="tool" aria-label="Render in the cloud"><svg><use href="#potcloud"/></svg></button>
    <button class="tool"><span class="rb">RB</span></button>
    <button class="tool" aria-label="Gallery"><svg><use href="#pics"/></svg></button><i class="grip-v"></i>
    <select class="combo path" aria-label="Project folder"><option>C:\Users\user\Documents\3ds Max 2020</option></select>
    <button class="tool" aria-label="Project settings"><svg><use href="#sgear"/></svg></button>
    <button class="tool" aria-label="Project folder"><svg><use href="#sfold"/></svg></button>
    <button class="tool" aria-label="Project tree"><svg><use href="#stree"/></svg></button>
    <button class="tool" aria-label="Project nodes"><svg><use href="#snode"/></svg></button>
  </div>
  <div class="bar second" role="toolbar" aria-label="Extras toolbar">
    <button class="tool" aria-label="Sphere"><svg><use href="#ysphere"/></svg></button><i class="sep wide"></i>
    <button class="tool" aria-label="Array"><svg><use href="#array"/></svg></button>
    <button class="tool" aria-label="Blob mesh"><svg><use href="#blobs"/></svg></button>
    <button class="tool" aria-label="Lattice"><svg><use href="#lattice"/></svg></button>
    <button class="tool" aria-label="Noise"><svg><use href="#bush"/></svg></button>
    <button class="tool" aria-label="Grass"><svg><use href="#grass"/></svg></button>
    <button class="tool"><svg><use href="#hair"/></svg><span class="tag">HF</span></button>
    <button class="tool"><svg><use href="#ox"/></svg><span class="tag">Ox</span></button><i class="sep wide"></i>
    <button class="tool fly" aria-label="Glass material"><svg><use href="#glass"/></svg></button>
    <button class="tool fly" aria-label="Material window"><svg><use href="#matwin"/></svg></button>
    <button class="tool" aria-label="Region"><svg><use href="#redbox"/></svg></button><i class="sep wide"></i>
    <button class="tool" aria-label="Documents"><svg><use href="#docs"/></svg></button>
    <button class="tool" aria-label="Help"><svg><use href="#help"/></svg></button><i class="grip-v"></i>
    <button class="xsmp">XSMP</button><i class="grip-v"></i>
    <button class="tool" aria-label="Light"><svg><use href="#bulb"/></svg></button>
    <button class="tool" aria-label="Sun"><svg><use href="#sun"/></svg></button>
    <button class="tool" aria-label="Camera"><svg><use href="#cam"/></svg></button>
    <button class="tool" aria-label="Trees"><svg><use href="#trees"/></svg></button>
    <button class="tool" aria-label="Library"><svg><use href="#book"/></svg></button>
    <button class="tool" aria-label="Level of detail"><svg><use href="#halftree"/></svg></button>
    <button class="tool" aria-label="Tree card"><svg><use href="#treecard"/></svg></button>
    <button class="tool" aria-label="Ring"><svg><use href="#ringc"/></svg></button>
    <button class="tool" aria-label="Frame stack"><svg><use href="#stackball"/></svg></button>
    <button class="tool" aria-label="Play grid"><svg><use href="#gridplay"/></svg></button>
    <button class="tool" aria-label="Play panel"><svg><use href="#panelplay"/></svg></button>
    <button class="tool" aria-label="Add camera"><svg><use href="#camplus"/></svg></button>
    <button class="tool" aria-label="Panel"><svg><use href="#panel"/></svg></button>
    <button class="tool" aria-label="Teapot"><svg><use href="#wpot"/></svg></button>
    <button class="tool" aria-label="Light lister"><svg><use href="#bulbdot"/></svg></button>
  </div>
  <div class="ribbon-tabs"><button class="mini" aria-label="Minimize ribbon"><i class="up"></i></button><i class="down small"></i></div>
</header>

<div class="middle">
  <aside class="side" aria-label="Side toolbar">
    <i class="remnant"></i><i class="rule gap"></i>
    <button class="vtool fly" aria-label="Circular selection"><svg><use href="#ringdots"/></svg></button><i class="grip-h"></i>
    <button class="vtool fly" aria-label="Asset list"><svg><use href="#ballwin"/></svg></button><i class="rule"></i>
    <button class="vtool fly" aria-label="Rigid body"><svg><use href="#ball"/></svg></button>
    <button class="vtool fly" aria-label="Cloth"><svg><use href="#shirt"/></svg></button>
    <button class="vtool fly" aria-label="Constraint"><svg><use href="#capsule"/></svg></button>
    <button class="vtool fly" aria-label="Ragdoll"><svg><use href="#stick"/></svg></button><i class="rule"></i>
    <button class="vtool" aria-label="Reset simulation"><svg><use href="#cogback"/></svg></button>
    <button class="vtool fly" aria-label="Start simulation"><svg><use href="#cogplay"/></svg></button>
    <button class="vtool" aria-label="Step simulation"><svg><use href="#cogpause"/></svg></button><i class="grip-h"></i>
    <button class="vtool axis">X</button>
    <button class="vtool axis">Y</button>
    <button class="vtool axis on">Z</button>
    <button class="vtool axis two fly">XY</button>
    <button class="vtool on" aria-label="Snap axis constraint"><svg><use href="#xysnap"/></svg></button><i class="grip-h loose"></i>
    <button class="vtool" aria-label="Layer window"><svg><use href="#layerwin"/></svg></button>
    <button class="vtool" aria-label="Create layer"><svg><use href="#addlayer"/></svg></button>
    <button class="vtool" aria-label="Add to layer"><svg><use href="#layerdim"/></svg></button>
    <button class="vtool" aria-label="Select in layer"><svg><use href="#sqptr"/></svg></button>
    <button class="vtool" aria-label="Set current layer"><svg><use href="#layerptr"/></svg></button>
  </aside>
  <div class="main">
    <section class="ribbon" aria-label="Ribbon">
      <i class="grip-tall"></i>
      <div class="poly">
        <div class="poly-tools">
          <div class="trio"><button aria-label="Vertex"><svg><use href="#gcube"/></svg></button><button aria-label="Edge"><svg><use href="#gcube"/></svg></button><button aria-label="Polygon"><svg><use href="#gcube"/></svg></button></div>
          <button class="pbtn" aria-label="Element"><svg><use href="#gcube"/></svg></button>
          <button class="pbtn long" aria-label="Preview"><i class="dot"></i></button>
          <i class="pline"></i>
          <button class="pbtn raised" aria-label="Collapse stack"><svg viewBox="0 0 24 24"><path d="M5 5H16M5 9H14M5 13H14M5 17H14M18 4V19M15 16 18 19 21 16" stroke="#888" fill="none" stroke-width="1.500"/></svg></button>
          <div class="pcol"><button class="pbtn" aria-label="Pin stack"><svg viewBox="0 0 24 24"><path d="M3 12H10M10 8V16L17 14V10Z" stroke="#888" fill="#777" stroke-width="1.500"/></svg></button><button class="pbtn pon" aria-label="Show end result"><svg viewBox="0 0 24 24"><path d="M4 4H11V6H10V21H5V6H4Z" fill="#9fdcf5" stroke="#123"/><path d="M17 21V5M14 8 17 5 20 8" fill="none" stroke="#fff" stroke-width="2"/></svg></button></div>
        </div>
        <button class="poly-name">Polygon Modeling <i class="down"></i></button>
      </div>
    </section>
    <div class="work">
      <div class="tabs-col"><i class="grip-h"></i><div class="well"><button class="expand" aria-label="Create viewport layout tab"><i class="right"></i></button><button class="thumb" aria-label="Viewport layout"><i></i></button></div></div>
      <main class="viewport">
        <svg class="scene" viewBox="80 191 1572 812" preserveAspectRatio="xMidYMid slice" role="img" aria-label="Flanged pipe valve on a grid">
          <g stroke="url(#gGrid)" fill="none">
            <path d="M-109 190 219 1003M178 190 506 1003M752 190 1080 1003M1039 190 1367 1003M1326 190 1654 1003M80 275 1654 96M80 427 1654 248M80 579 1654 400M80 883 1654 704M80 1035 1654 856"/>
          </g>
          <path d="M465 190 790 1003M80 731 1654 552" stroke="#050505" fill="none"/>
          <g transform="translate(500 460) scale(.3333)">
            <path d="M690 410C664 415 660 470 668 510L640 752 672 745C690 800 710 822 735 825L800 820 815 800 780 420Z" fill="#000"/>
            <use href="#sidenut" x="690" y="468"/><use href="#sidenut" x="690" y="768"/>
            <path d="M606 512 705 498C728 560 738 650 728 738L625 752Z" fill="url(#gSteel)"/>
            <path d="M690 412 725 406C765 510 782 650 782 803L752 806C750 650 735 510 690 412Z" fill="url(#gPlate)"/>
            <path d="M729 406 763 403C808 500 822 660 820 792L787 803C787 650 770 510 729 406Z" fill="url(#gPlate)"/>
            <use href="#sidenut" transform="translate(798 455) scale(-1 1)"/><use href="#sidenut" transform="translate(835 695) scale(-1 1)"/><use href="#sidenut" x="723" y="708"/>
            <path d="M260 770 310 800C340 855 400 886 470 886 535 886 590 850 625 800L600 560 300 560Z" fill="#000"/>
            <path d="M132 474C104 520 110 640 125 720 135 800 150 860 175 886L250 882 262 860 240 560 206 466Z" fill="#000"/>
            <path d="M238 548 320 545C345 600 378 650 375 710 370 755 350 775 330 780L262 782Z" fill="url(#gSteel)"/>
            <path d="M144 592C158 600 162 700 172 745 155 730 142 670 144 592Z" fill="#999"/>
            <path d="M130 476 168 469C208 560 226 700 228 868L192 868C190 700 178 560 150 500Z" fill="url(#gPlate)"/>
            <path d="M173 468 205 466C244 550 266 710 262 862L232 868C230 700 212 560 173 468Z" fill="url(#gPlate)"/>
            <use href="#sidenut" x="135" y="528"/><use href="#sidenut" x="100" y="587"/><use href="#sidenut" x="172" y="768"/><use href="#sidenut" x="135" y="828"/><use href="#sidenut" transform="translate(243 516) scale(-1 1)"/><use href="#sidenut" transform="translate(280 760) scale(-1 1)"/>
            <path d="M318 500C300 570 330 620 352 650 385 700 372 750 328 788 345 840 400 869 470 870 550 869 605 830 634 775 635 730 608 700 612 630 613 590 624 550 624 500Z" fill="url(#gBody)"/>
            <path d="M318 500C300 570 330 620 352 650 385 700 372 750 328 788 345 840 400 869 470 870 550 869 605 830 634 775 635 730 608 700 612 630 613 590 624 550 624 500Z" fill="url(#gShade)"/>
            <path d="M249 365V425C262 500 360 536 465 536 580 536 665 500 680 435V365Z" fill="#c6c6c6"/>
            <path d="M249 410C262 470 350 505 465 505 580 505 665 470 680 408" fill="none" stroke="#444" stroke-width="3"/>
            <path d="M249 395V430C256 450 270 470 290 485" fill="none" stroke="#000" stroke-width="6"/>
            <ellipse cx="465" cy="362" rx="216" ry="116" fill="#bebebe" stroke="#d8d8d8" stroke-width="2"/>
            <ellipse cx="463" cy="360" rx="127" ry="72" fill="url(#gDome)"/>
            <use href="#nut" x="433" y="256"/><use href="#nut" x="566" y="270"/><use href="#nut" x="323" y="300"/><use href="#nut" x="641" y="331"/><use href="#nut" x="297" y="369"/><use href="#nut" x="615" y="402"/><use href="#nut" x="375" y="427"/><use href="#nut" x="504" y="441"/>
            <path d="M502 708 603 960" stroke="#000" stroke-width="3"/>
            <path d="M625 108 680 102 689 130 636 136ZM636 136 636 182 689 176V130M625 108V152L636 182" fill="none" stroke="#5b6fd8" stroke-width="3"/>
            <path d="M657 142 1430 76M655 437 1430 372" stroke="#44aef0" stroke-width="3"/>
          </g>
          <g fill="none" stroke-width="1"><path d="M105 978 134 975M129 968 134 976M134 968 129 976" stroke="#d01010"/><path d="M105 978 103 962M100 960 104 965M104 960 101 968" stroke="#109010"/><path d="M105 978 106 958M105 951H109L105 957H109" stroke="#1010d0"/></g>
        </svg>
        <div class="overlay">
          <div class="vp-label"><button>[+]</button><button>[Orthographic ]</button><button>[Standard ]</button><button>[Default Shading ]</button></div>
          <table class="stats">
            <tr><td></td><td>Total</td><td></td></tr>
            <tr><td>Polys:</td><td>3 291 472</td><td>0</td></tr>
            <tr><td>Verts:</td><td>1 654 453</td><td>0</td></tr>
            <tr><td></td><td></td><td></td></tr>
            <tr><td>FPS:</td><td>0.536</td><td></td></tr>
          </table>
        </div>
      </main>
      <aside class="command" aria-label="Command panel">
        <i class="grip-h"></i>
        <div class="ctabs"><button class="cur" aria-label="Create"></button><button aria-label="Modify"></button><button aria-label="Hierarchy"></button><button aria-label="Motion"><svg><use href="#disc"/></svg></button><button aria-label="Display"><svg><use href="#monitor"/></svg></button><button aria-label="Utilities"><svg><use href="#wrench"/></svg></button></div>
        <div class="namerow"><input type="text" aria-label="Object name"><button class="swatch" aria-label="Object color"></button></div>
        <select class="combo modlist" aria-label="Modifier list"><option></option></select>
        <div class="modstack"></div>
        <div class="stackbtns"><button aria-label="Remove modifier"><svg><use href="#trash"/></svg></button><i class="sep"></i><button aria-label="Configure modifier sets"><svg><use href="#sets"/></svg></button></div>
        <div class="splitter"><i></i></div>
        <div class="rollouts"></div>
      </aside>
    </div>
  </div>
</div>

<footer>
  <div class="time">
    <i class="grip-tall"></i>
    <div class="timecol">
      <div class="slider"><button>&lt;</button><button class="knob">0 / 100</button><button>&gt;</button></div>
      <div class="track"><button class="mini-curve" aria-label="Open mini curve editor"><svg><use href="#curvemini"/></svg></button><div class="ruler"><svg id="ruler" role="img" aria-label="Track bar"></svg></div></div>
    </div>
  </div>
  <div class="status">
    <div class="pink"></div><i class="vline"></i><span class="sel">None Selected</span>
    <button class="sbtn" aria-label="Isolate selection"><svg><use href="#iso"/></svg></button>
    <button class="sbtn" aria-label="Selection lock"><svg><use href="#lockd"/></svg></button>
    <button class="sbtn" aria-label="Absolute mode"><svg><use href="#absmode"/></svg></button>
    <label>X: <input type="text" value="-2.382m"></label>
    <label>Y: <input type="text" value="-1.363m"></label>
    <label>Z: <input type="text" value="0.0m"></label>
    <span class="gridsize">Grid = 1.0m</span>
    <div class="play">
      <button class="sbtn" aria-label="Go to start"><svg><use href="#p1"/></svg></button>
      <button class="sbtn" aria-label="Previous frame"><svg><use href="#p2"/></svg></button>
      <button class="sbtn" aria-label="Play"><svg><use href="#p3"/></svg></button>
      <button class="sbtn" aria-label="Next frame"><svg><use href="#p4"/></svg></button>
      <button class="sbtn" aria-label="Go to end"><svg><use href="#p5"/></svg></button>
    </div>
    <button class="setkey" aria-label="Set key"><i></i></button>
    <button class="autokey">Auto Key</button>
    <select class="combo keysel" aria-label="Key selection"><option>Selected</option></select>
    <div class="nav">
      <button class="sbtn" aria-label="Zoom"><svg><use href="#zoomi"/></svg></button>
      <button class="sbtn" aria-label="Zoom all"><svg><use href="#zoomall"/></svg></button>
      <button class="sbtn" aria-label="Zoom extents"><svg><use href="#extent"/></svg></button>
      <button class="sbtn" aria-label="Zoom extents all"><svg><use href="#extall"/></svg></button>
    </div>
  </div>
</footer>
</div>

<section class="explorer" aria-label="Layer Explorer">
  <div class="titlebar"><svg class="logo"><use href="#app3"/></svg><span>Scene Explorer - Layer Explorer</span>
    <button aria-label="Minimize"><svg viewBox="0 0 12 12"><path d="M1 6H11"/></svg></button><button aria-label="Maximize"><svg viewBox="0 0 12 12"><path d="M1.500 1.500H10.500V10.500H1.500Z"/></svg></button><button aria-label="Close"><svg viewBox="0 0 12 12"><path d="M1 1 11 11M11 1 1 11"/></svg></button></div>
  <nav class="menu"><button>Select</button><button>Display</button><button>Edit</button><button>Customize</button></nav>
  <div class="etools">
    <input type="text" class="find" aria-label="Find"><button class="etool" aria-label="Clear"><svg viewBox="0 0 16 16"><path d="M3 3 13 13M13 3 3 13" stroke="#999" stroke-width="2"/></svg></button>
    <button class="etool on" aria-label="Filter"><svg><use href="#filterarrow"/></svg></button><i class="esep"></i>
    <button class="etool" aria-label="Lock"><svg><use href="#lock"/></svg></button>
    <button class="etool" aria-label="New layer"><svg><use href="#add16"/></svg></button>
    <button class="etool" aria-label="Add to active layer"><svg><use href="#lay1"/></svg></button>
    <button class="etool" aria-label="Select children"><svg><use href="#tree16"/></svg></button>
    <button class="etool" aria-label="Make active"><svg><use href="#lay2"/></svg></button>
    <button class="etool" aria-label="Hide layers"><svg><use href="#eye16"/></svg></button>
    <button class="etool" aria-label="Freeze layers"><svg><use href="#snow16"/></svg></button>
  </div>
  <div class="ebody">
    <div class="filters">
      <div class="cats">
        <button aria-label="Geometry"><svg><use href="#c1"/></svg></button><button aria-label="Shapes"><svg><use href="#c2"/></svg></button><button aria-label="Lights"><svg><use href="#c3"/></svg></button><button aria-label="Cameras"><svg><use href="#c4"/></svg></button><button aria-label="Helpers"><svg><use href="#c5"/></svg></button><button aria-label="Space warps"><svg><use href="#c6"/></svg></button><button aria-label="Groups"><svg><use href="#c7"/></svg></button><button aria-label="References"><svg><use href="#c8"/></svg></button><button aria-label="Bones"><svg><use href="#c9"/></svg></button><button aria-label="Containers"><svg><use href="#c10"/></svg></button><button aria-label="Frozen"><svg><use href="#c11"/></svg></button><button aria-label="Hidden"><svg><use href="#c12"/></svg></button>
      </div>
      <div class="plain"><button aria-label="Display all"><svg><use href="#doc"/></svg></button><button aria-label="Display none"><svg><use href="#blank"/></svg></button><button aria-label="Invert display"><svg><use href="#docout"/></svg></button></div>
      <div class="plain"><button aria-label="Filter settings"><svg><use href="#filtergear"/></svg></button><button aria-label="Filter list"><svg><use href="#filter"/></svg></button><button aria-label="Display assets"><svg><use href="#brick"/></svg></button></div>
    </div>
    <div class="treewrap">
    <table class="tree">
      <colgroup><col class="k1"><col class="k2"><col class="k3"><col></colgroup>
      <thead><tr><th><div class="hd">Name (Sorted Ascending)<i class="up"></i></div></th><th>Fr...</th><th>Renderable</th><th>Display as Box</th></tr></thead>
      <tbody>
        <tr><td><div class="nm"><i class="tw"></i><svg class="lit"><use href="#eye"/></svg><svg class="teal"><use href="#layers"/></svg><span>0 (default)</span></div></td><td><svg><use href="#flake"/></svg></td><td><svg class="lg"><use href="#teapot"/></svg></td><td><svg><use href="#boxi"/></svg></td></tr>
        <tr><td><div class="nm"><i class="tw right"></i><svg class="lit"><use href="#eye"/></svg><svg><use href="#layers"/></svg><span>Cameras</span></div></td><td><svg><use href="#flake"/></svg></td><td><svg class="lg"><use href="#teapot"/></svg></td><td><svg><use href="#boxi"/></svg></td></tr>
        <tr><td><div class="nm"><i class="tw right"></i><svg class="lit"><use href="#eye"/></svg><svg><use href="#layers"/></svg><span>Pipe Devices</span></div></td><td><svg><use href="#flake"/></svg></td><td><svg class="lg"><use href="#teapot"/></svg></td><td><svg><use href="#boxi"/></svg></td></tr>
        <tr><td><div class="nm"><i class="tw right"></i><svg><use href="#eyeoff"/></svg><svg><use href="#layers"/></svg><span class="dim">Pipes</span></div></td><td><svg><use href="#flake"/></svg></td><td><svg class="lg"><use href="#teapot"/></svg></td><td><svg><use href="#boxi"/></svg></td></tr>
      </tbody>
    </table>
    </div>
  </div>
  <div class="efoot">
    <input type="text" class="ename" value="Layer Explorer" aria-label="Explorer name"><button class="drop" aria-label="Explorer list"><i class="down dark"></i></button>
    <button class="etool on" aria-label="Sort by layer"><svg class="lit"><use href="#layers"/></svg></button><button class="etool" aria-label="Sort by hierarchy"><svg><use href="#hier"/></svg></button><i class="esep"></i>
    <label for="selset">Selection Set:</label><select id="selset" class="combo"><option></option></select>
    <button class="etool" aria-label="Select all"><svg><use href="#docp"/></svg></button><button class="etool" aria-label="Select none"><svg><use href="#blankp"/></svg></button><button class="etool" aria-label="Select invert"><svg><use href="#docoutp"/></svg></button><i class="esep"></i>
    <button class="etool" aria-label="Select by filter"><svg><use href="#filterptr"/></svg></button>
  </div>
  <p class="hint">TOGGLE LAYER EXPLORER<br>TO CHOOSE MODELS</p>
</section>

<svg class="arrow" viewBox="0 0 120 116" aria-hidden="true"><path d="M4 4H34" stroke="#eda005" stroke-width="4" stroke-linecap="round"/><path d="M40 28 113 111" stroke="#eda005" stroke-width="5"/><path d="M22 5 59 31 48 33 43 38 41 45Z" fill="#eda005"/></svg>
<h1 class="banner">USING IN 3DS MAX</h1>
<script src="script.js"></script>
</body>
</html>
```
FILE: script.js
```js
// Track bar: one tick per frame, a label every five frames.
const NS = 'http://www.w3.org/2000/svg';
const ruler = document.getElementById('ruler');
function add(name, attrs, text) {
  const el = document.createElementNS(NS, name);
  for (const key in attrs) el.setAttribute(key, attrs[key]);
  if (text !== undefined) el.textContent = text;
  ruler.appendChild(el);
}
add('rect', { x: -3, y: 2, width: 7, height: 23, class: 'now' });
for (let f = 0; f <= 100; f++) {
  const major = f % 5 === 0;
  add('line', { x1: f + '%', x2: f + '%', y1: 0, y2: major ? 26 : 11, class: 'tick' });
  if (major) add('text', { x: f + '%', y: 22, class: 'num' }, f);
}
```
FILE: styles.css
```css
* { box-sizing: border-box; }
body { margin: 0; background: #444; overflow: hidden; font: 11px/16px Roboto, sans-serif; color: #e2e2e2; height: 100vh; position: relative; }
button, input, select { font: inherit; color: inherit; border: 0; margin: 0; padding: 0; background: none; border-radius: 0; }
button { display: flex; align-items: center; justify-content: center; flex: none; }
svg { display: block; flex: none; }
.defs { position: absolute; width: 0; height: 0; }
.app { display: flex; flex-direction: column; height: calc(100vh + 12px); }

/* Toolbars */
.topbars { flex: none; }
.bar { display: flex; height: 33px; padding-left: 518px; }
.bar.second { padding-left: 512px; height: 32px; }
.tool { width: 32px; height: 31px; position: relative; }
.tool svg, .vtool svg { width: 24px; height: 24px; }
.tag { position: absolute; left: 3px; bottom: 3px; font: 10px/10px "DejaVu Sans Mono", monospace; color: #fff; }
.on { background: #5b87c5; border-radius: 3px; }
.tool.on { width: 30px; margin: 1px; height: 29px; }
.fly { position: relative; }
.fly::after { content: ""; position: absolute; right: 3px; bottom: 0; border-left: 5px solid transparent; border-bottom: 5px solid #e0e0e0; }
.sep { width: 2px; height: 16px; margin: 7px 2px; background: #1d1d1d; flex: none; }
.sep.wide { margin: 7px 3px; }
.grip-v { width: 3px; height: 27px; margin: 2px 4px; flex: none; background: radial-gradient(circle, #aaa 1px, transparent 1px) 0 0 / 2px 3px; }
.grip-h { display: block; height: 3px; margin: 3px; flex: none; background: radial-gradient(circle, #aaa 1px, transparent 1px) 0 0 / 3px 2px; }
.grip-h.loose { margin: 10px 3px 4px; }
.combo { appearance: none; height: 19px; padding: 0 20px 0 5px; margin-top: 3px; background: #646464 url("data:image/svg+xml,%3Csvg xmlns='http://www.w3.org/2000/svg' width='7' height='6'%3E%3Cpath d='M0 0h7L3.500 6z' fill='%23ddd'/%3E%3C/svg%3E") no-repeat right 6px center / 7px 6px; }
.ref { width: 64px; padding-left: 0; margin-right: 1px; }
.sets { width: 118px; margin-left: 1px; padding-right: 16px; }
.path { width: 222px; height: 29px; margin: 1px 4px 0 0; padding-right: 14px; }
.path ~ .tool { width: 30px; }
.rb { background: linear-gradient(#3b9bf5, #1353c0); border-radius: 4px; width: 23px; height: 23px; font: bold 15px/23px "Liberation Sans", sans-serif; color: #fff; }
.xsmp { width: 70px; height: 31px; }
.ribbon-tabs { height: 21px; border-top: 1px solid #6b6b6b; border-bottom: 1px solid #2a2a2a; background: #515151; display: flex; align-items: center; gap: 6px; padding-left: 523px; }
.mini { width: 13px; height: 8px; background: #e6e6e6; border-radius: 2px; }
.up { border: 4px solid transparent; border-top: 0; border-bottom: 5px solid #ddd; }
.mini .up { border-width: 0 3px 4px; border-bottom-color: #333; }
.down { border: 4px solid transparent; border-bottom: 0; border-top: 6px solid #ddd; }
.down.small { border-width: 4px 3px 0; }
.down.dark { border-width: 4px 3px 0; border-top-color: #111; }
.right { border: 5px solid transparent; border-right: 0; border-left: 6px solid #eee; }

/* Left toolbar */
.middle { flex: 1; display: flex; min-height: 0; }
.side { width: 34px; flex: none; padding-top: 40px; display: flex; flex-direction: column; }
.side > * { flex: none; }
.remnant { height: 1px; margin: 0 7px 4px; background: #3cc1c1; }
.rule { height: 2px; margin: 0 1px 7px 4px; background: #1d1d1d; }
.rule.gap { margin: 4px 7px 4px 4px; }
.vtool { width: 30px; height: 29px; margin: 1px 2px; }
.vtool svg { width: 23px; height: 23px; }
.vtool.fly::after { right: 1px; }
.axis { font: bold 24px/29px "Open Sans", sans-serif; color: #dcdcdc; }
.axis.two { font-size: 17px; }

/* Ribbon */
.main { flex: 1; min-width: 0; display: flex; flex-direction: column; }
.ribbon { height: 98px; flex: none; background: linear-gradient(#484848, #373737); border-bottom: 1px solid #2d2d2d; display: flex; align-items: flex-end; }
.grip-tall { width: 3px; align-self: stretch; margin: 0 6px 0 2px; background: radial-gradient(circle, #aaa 1px, transparent 1px) 0 0 / 2px 3px; flex: none; }
.poly { width: 222px; height: 97px; background: #5a5a5a; display: flex; flex-direction: column; justify-content: flex-end; border: 1px solid #6a6a6a; border-top: 0; }
.poly-tools { display: flex; align-items: flex-end; padding: 0 6px 5px 3px; }
.trio { display: flex; border: 1px solid #3f3f3f; margin-right: 4px; }
.trio button { width: 23px; height: 20px; }
.trio button + button { border-left: 1px solid #3f3f3f; }
.trio svg, .pbtn svg { width: 20px; height: 20px; }
.pbtn { width: 24px; height: 22px; border: 1px solid #3f3f3f; margin-right: 4px; }
.pbtn.long { width: 40px; margin-right: 8px; }
.pbtn.raised { margin-bottom: 12px; }
.pcol { display: flex; flex-direction: column; gap: 2px; }
.pcol .pbtn { margin-right: 0; }
.pbtn.pon { background: linear-gradient(#86aee6, #4a6da8); border-color: #26416c; }
.dot { width: 13px; height: 13px; border-radius: 50%; background: #777; border: 3px solid #6a6a6a; }
.pline { width: 1px; height: 36px; background: #333; margin-right: 7px; }
.poly-name { height: 16px; background: linear-gradient(#5c5c5c, #484848); gap: 6px; font-size: 12px; }

/* Workspace */
.work { flex: 1; min-height: 0; display: flex; padding-top: 5px; }
.tabs-col { width: 44px; flex: none; padding-right: 4px; display: flex; flex-direction: column; }
.tabs-col .grip-h { margin: 2px 4px 4px 2px; }
.well { flex: 1; background: linear-gradient(90deg, #303030 85%, #252525); border: 1px solid #393939; border-bottom: 0; padding-bottom: 2px; display: flex; flex-direction: column; justify-content: flex-end; align-items: flex-start; gap: 11px; }
.expand { width: 20px; height: 19px; margin-left: 9px; background: #4c4c4c; border-radius: 2px; }
.thumb { width: 35px; height: 44px; margin-left: 3px; background: linear-gradient(#56657b, #3a7fdc); border-radius: 3px; }
.thumb i { width: 31px; height: 28px; border: 1px solid #333; background: linear-gradient(#5f6874, #6a7587); }
.viewport { flex: 1; min-width: 0; border: 2px solid #806820; background: linear-gradient(#181818, #2f2f2f 35%, #414141 65%, #4c4c4c); display: grid; overflow: hidden; }
.scene { grid-area: 1/1; width: 100%; height: 100%; min-height: 0; }
.overlay { grid-area: 1/1; padding: 5px 3px; z-index: 1; }
.vp-label { display: flex; gap: 2px; color: #dcdcdc; font-size: 12px; }
.stats { border-collapse: collapse; margin: 16px 0 0 10px; color: #e8d822; }
.stats td { padding: 0; height: 16px; line-height: 16px; }
.stats td:first-child { width: 40px; }
.stats td:nth-child(2) { width: 70px; }
.command { width: 266px; flex: none; padding: 0 4px 0 8px; display: flex; flex-direction: column; }
.command .grip-h { margin: 2px 0 4px; }
.ctabs { display: flex; height: 26px; border-bottom: 1px solid #3a3a3a; margin-bottom: 8px; }
.ctabs button { width: 30px; margin-right: 1px; background: #3b3b3b; }
.ctabs svg { width: 24px; height: 24px; }
.namerow { display: flex; align-items: center; gap: 7px; margin-bottom: 10px; }
.namerow input { flex: 1; min-width: 0; height: 18px; background: #595959; }
.swatch { width: 16px; height: 20px; background: #c62c84; border: 1px solid #111; margin-right: 3px; }
.modlist { margin: 0 1px 5px 0; }
.modstack { height: 281px; border: 2px solid #eee; margin-right: 1px; }
.stackbtns { display: flex; justify-content: flex-end; align-items: center; height: 36px; padding-right: 101px; }
.stackbtns svg { width: 16px; height: 16px; }
.stackbtns .sep { margin: 0 10px 0 8px; }
.splitter { height: 20px; display: flex; align-items: center; justify-content: center; background: linear-gradient(#666, #666) 0 10px / 100% 1px no-repeat; }
.splitter i { width: 22px; height: 3px; border: solid #444; border-width: 0 4px; background: repeating-linear-gradient(90deg, #ccc 0 1px, #444 1px 2px); }
.rollouts { flex: 1; border: 1px solid #3b3b3b; border-right-width: 4px; border-radius: 2px; }

/* Time slider and track bar */
.time { display: flex; height: 53px; padding-left: 34px; }
.time .grip-tall { margin: 7px 5px 2px 2px; }
.timecol { flex: 1; min-width: 0; }
.slider { display: flex; gap: 2px; padding: 6px 0 4px; }
.slider button { width: 14px; height: 16px; background: #5d5d5d; border-radius: 2px; }
.slider .knob { width: 123px; background: #646464; }
.track { display: flex; border-top: 1px solid #060606; height: 27px; }
.mini-curve { width: 50px; padding-right: 10px; }
.mini-curve svg { width: 16px; height: 16px; }
.ruler { flex: 1; background: #292929; margin-right: 50px; padding: 0 7px 0 6px; height: 25px; }
.ruler svg { width: 100%; height: 25px; overflow: visible; }
.tick { stroke: #6e6e6e; shape-rendering: crispEdges; }
.now { fill: #8d8622; }
.num { text-anchor: middle; font-size: 11px; fill: #c4c4c4; }

/* Status bar */
.status { display: flex; align-items: center; height: 34px; padding-left: 5px; white-space: nowrap; }
.pink { width: 97px; height: 30px; margin-top: 8px; background: #dcc4c6; border: 2px solid #999; border-right-color: #fff; }
.vline { width: 1px; height: 100%; background: #111; margin: 0 3px 0 5px; }
.sel { color: #fff; flex: 1; }
.sbtn { width: 26px; height: 24px; }
.sbtn svg { width: 16px; height: 16px; }
.status label { display: flex; align-items: center; justify-content: space-between; width: 72px; margin-left: 12px; color: #fff; }
.status label:first-of-type { margin-left: 2px; }
.status input { width: 57px; height: 20px; background: #5a5a5a; color: #8a8a8a; padding-left: 3px; }
.gridsize { width: 120px; padding-left: 14px; color: #fff; }
.play { display: flex; margin-right: 7px; }
.play .sbtn { width: 25px; }
.setkey { width: 42px; height: 22px; background: #5e5e5e; border-radius: 2px; align-items: flex-end; }
.setkey i { width: 6px; height: 14px; background: #ccc; }
.autokey { width: 46px; height: 20px; background: #585858; margin: 0 5px; }
.keysel { width: 114px; margin: 0 10px 0 0; }
.nav { display: flex; margin-right: 8px; }
.nav .sbtn { width: 24px; }

/* Layer Explorer window */
.explorer { position: absolute; left: 969px; top: 106px; width: 800px; height: 585px; border: 6px solid #eda005; border-radius: 6px; background: #444; display: flex; flex-direction: column; color: #eee; }
.titlebar { height: 27px; background: #fff; color: #8f8f8f; display: flex; align-items: center; padding: 0 0 2px 7px; flex: none; }
.titlebar span { flex: 1; }
.logo { width: 15px; height: 15px; margin-right: 5px; }
.titlebar button { width: 42px; height: 24px; }
.titlebar button svg { width: 12px; height: 12px; fill: none; stroke: #8a8a8a; }
.menu { display: flex; height: 23px; padding: 0 13px; gap: 17px; flex: none; }
.menu button { height: 22px; }
.etools { display: flex; height: 25px; align-items: center; padding: 0 0 3px 3px; flex: none; }
.find { width: 140px; height: 21px; border: 1px solid #666; }
.etool { width: 22px; height: 22px; }
.etool.on { border-radius: 0; margin: 0 1px; }
.etool svg { width: 15px; height: 15px; }
.esep { width: 1px; height: 22px; background: #777; margin: 0 3px 0 2px; }
.ebody { flex: 1; display: flex; min-height: 0; }
.filters { width: 23px; border-right: 1px solid #333; padding-top: 2px; flex: none; }
.cats { height: 256px; display: flex; flex-direction: column; justify-content: space-between; }
.cats button { width: 20px; height: 19px; background: #5b87c5; }
.filters svg { width: 15px; height: 15px; }
.plain { border-top: 2px solid #686868; margin: 3px 2px 0 1px; padding-top: 2px; height: 67px; }
.plain button { width: 18px; height: 21px; }
.treewrap { flex: 1; }
.tree { border-collapse: collapse; table-layout: fixed; width: 100%; }
.tree th, .tree td { padding: 0; height: 17px; line-height: 15px; }
.tree .k1 { width: 221px; }
.tree .k2 { width: 33px; }
.tree .k3 { width: 130px; }
.tree th { height: 19px; text-align: left; font-weight: 400; border: 1px solid #585858; border-left-color: #383838; border-top-color: #333; padding-left: 2px; }
.hd { display: flex; align-items: center; justify-content: space-between; padding-right: 2px; }
.tree td { background: #4c4c4c; border-right: 1px solid #575757; color: #303030; }
.tree tr:nth-child(even) td { background: #595959; }
.tree tr td:first-child { background: linear-gradient(90deg, #444 46px, transparent 46px), #4c4c4c; }
.tree tr:nth-child(even) td:first-child { background: linear-gradient(90deg, #444 46px, transparent 46px), #595959; }
.tree td > svg { width: 11px; height: 11px; margin: auto; }
.tree td > svg.lg { width: 14px; height: 13px; }
.nm { display: flex; align-items: center; color: #f2f2f2; height: 16px; }
.nm svg { width: 14px; height: 15px; color: #2d2d2d; }
.nm svg.lit, .lit { color: #e6e6e6; }
.nm svg.teal { color: #3cc1c1; }
.tw { width: 6px; margin: 0 4px 0 6px; flex: none; }
.nm span { margin-left: 4px; }
.nm .dim { color: #909090; }
.efoot { height: 25px; border-top: 1px solid #353535; display: flex; align-items: center; padding-left: 3px; flex: none; }
.ename { width: 135px; height: 21px; border: 1px solid #666; color: #e8ee10; padding-left: 2px; }
.drop { width: 15px; height: 22px; border-right: 1px solid #222; margin-right: 3px; }
.efoot label { margin-left: 2px; width: 71px; white-space: nowrap; }
.efoot .combo { width: 111px; margin: 0 2px 0 0; }
.efoot .combo ~ .etool { width: 23px; }
.hint { position: absolute; left: 0; right: 0; top: 318px; margin: 0; text-align: center; font: 900 37px/43px Lato, sans-serif; color: #eda005; pointer-events: none; }

/* Callout */
.arrow { position: absolute; left: 1082px; top: 32px; width: 120px; height: 116px; }
.banner { position: absolute; left: 0; top: 0; width: 518px; height: 126px; margin: 0; padding-left: 85px; background: #5a5a5a; color: #cacaca; font: 900 39px/122px Lato, sans-serif; white-space: nowrap; }
```
